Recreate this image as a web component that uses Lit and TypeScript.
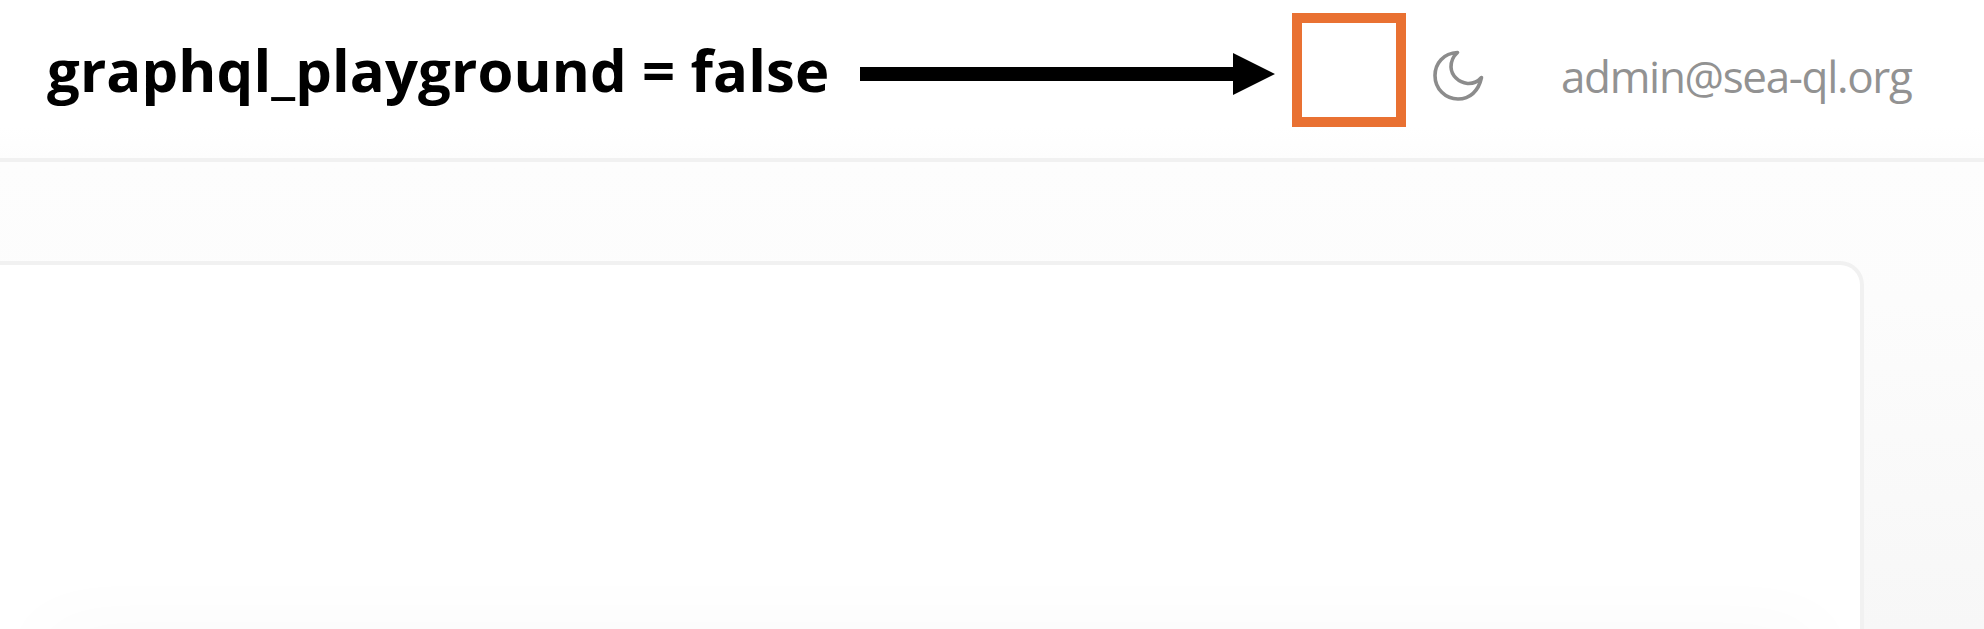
import { LitElement, html, css } from "lit";
import { customElement } from "lit/decorators.js";

@customElement("app-header")
class AppHeader extends LitElement {
  static styles = css`
    :host { display: flex; box-sizing: border-box; height: 162px; padding: 13px 0 0 47px;
      border-bottom: 4px solid #f1f1f1; background: linear-gradient(#fff, #fff 80%, #fdfdfd); align-items: flex-start; }
    .title { width: 813px; height: 80px; flex: none; white-space: nowrap; color: #000;
      font: 700 58px/80px "Open Sans", sans-serif; letter-spacing: 0.12px; margin-top: 17px; }
    .arrow { flex: none; width: 415px; height: 42px; margin-top: 40px; }
    .box { flex: none; box-sizing: border-box; width: 114px; height: 114px; margin-left: 17px; border: 10px solid #e97132; }
    .moon { flex: none; width: 56px; height: 56px; margin: 35px 0 0 24px; }
    .email { flex: none; margin: 33px 0 0 75px; white-space: nowrap; color: #929292;
      font: 400 44px/60px "Open Sans", sans-serif; letter-spacing: -1.33px; }
  `;
  render() {
    return html`
      <div class="title">graphql_playground = false</div>
      <svg class="arrow" viewBox="0 0 415 42"><path d="M0 14H373V0L415 21L373 42V28H0Z" /></svg>
      <div class="box"></div>
      <svg class="moon" viewBox="0 0 56 56" fill="none" stroke="#8c8c8c" stroke-width="3.6" stroke-linejoin="round">
        <path d="M27.500 4.500C13.500 5 5 15.500 5 27.500C5 41 15.500 51 28 51C40 51 48.500 43 51.500 29.500C48 33.500 43.500 35.800 37.500 35.500C28.500 34.500 21.300 27.500 21 19C21 13 23 8.500 27.500 4.500Z" />
      </svg>
      <div class="email">admin@sea-ql.org</div>
    `;
  }
}

@customElement("app-root")
class AppRoot extends LitElement {
  static styles = css`
    :host { display: flex; flex-direction: column; height: 629px; overflow: hidden; background: #fdfdfd; }
    .content { flex: 1; min-height: 0; padding: 99px 120px 0 0; background: linear-gradient(#fdfdfd, #fcfcfc 30%, #f7f7f7); }
    .card { box-sizing: border-box; height: 100%; border: solid #f1f1f1; border-width: 4px 4px 0 0;
      border-radius: 0 24px 0 0; background: #fff; overflow: hidden; display: flex; align-items: flex-end; justify-content: center; }
    .glow { width: 1720px; height: 0; border-radius: 60px; box-shadow: 0 30px 80px 28px rgba(0, 0, 0, 0.03); }
  `;
  render() {
    return html`
      <app-header></app-header>
      <div class="content"><div class="card"><div class="glow"></div></div></div>
    `;
  }
}
